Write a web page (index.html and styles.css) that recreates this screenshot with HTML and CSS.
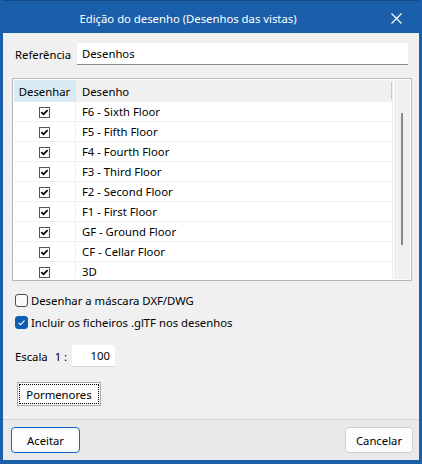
FILE: index.html
```html
<!DOCTYPE html>
<html lang="pt">
<head>
<meta charset="utf-8">
<title>Edição do desenho</title>
<link rel="stylesheet" href="styles.css">
</head>
<body>
<div class="window">
  <div class="titlebar">
    <div class="title">Edição do desenho (Desenhos das vistas)</div>
    <div class="close">
      <svg width="11" height="11" viewBox="0 0 11 11"><path d="M0.5 0.5 L10.5 10.5 M10.5 0.5 L0.5 10.5" stroke="#fff" stroke-width="1.2" fill="none"/></svg>
    </div>
  </div>
  <div class="body">
    <div class="ref-row">
      <span class="label ref-label">Referência</span>
      <div class="input ref-input">Desenhos</div>
    </div>
    <div class="table">
      <div class="list">
        <div class="head">
          <div class="c1 hc1">Desenhar</div>
          <div class="c2 hc2">Desenho</div>
          <div class="hsep"></div>
        </div>
        <div class="row"><div class="c1"><svg class="tcb" width="11" height="11" viewBox="0 0 11 11"><rect x="0.5" y="0.5" width="10" height="10" fill="#fff" stroke="#555"/><path d="M2.4 5.2 L4.5 7.4 L8.6 3.2" stroke="#000" stroke-width="1.7" fill="none"/></svg></div><div class="c2">F6 - Sixth Floor</div></div>
        <div class="row"><div class="c1"><svg class="tcb" width="11" height="11" viewBox="0 0 11 11"><rect x="0.5" y="0.5" width="10" height="10" fill="#fff" stroke="#555"/><path d="M2.4 5.2 L4.5 7.4 L8.6 3.2" stroke="#000" stroke-width="1.7" fill="none"/></svg></div><div class="c2">F5 - Fifth Floor</div></div>
        <div class="row"><div class="c1"><svg class="tcb" width="11" height="11" viewBox="0 0 11 11"><rect x="0.5" y="0.5" width="10" height="10" fill="#fff" stroke="#555"/><path d="M2.4 5.2 L4.5 7.4 L8.6 3.2" stroke="#000" stroke-width="1.7" fill="none"/></svg></div><div class="c2">F4 - Fourth Floor</div></div>
        <div class="row"><div class="c1"><svg class="tcb" width="11" height="11" viewBox="0 0 11 11"><rect x="0.5" y="0.5" width="10" height="10" fill="#fff" stroke="#555"/><path d="M2.4 5.2 L4.5 7.4 L8.6 3.2" stroke="#000" stroke-width="1.7" fill="none"/></svg></div><div class="c2">F3 - Third Floor</div></div>
        <div class="row"><div class="c1"><svg class="tcb" width="11" height="11" viewBox="0 0 11 11"><rect x="0.5" y="0.5" width="10" height="10" fill="#fff" stroke="#555"/><path d="M2.4 5.2 L4.5 7.4 L8.6 3.2" stroke="#000" stroke-width="1.7" fill="none"/></svg></div><div class="c2">F2 - Second Floor</div></div>
        <div class="row"><div class="c1"><svg class="tcb" width="11" height="11" viewBox="0 0 11 11"><rect x="0.5" y="0.5" width="10" height="10" fill="#fff" stroke="#555"/><path d="M2.4 5.2 L4.5 7.4 L8.6 3.2" stroke="#000" stroke-width="1.7" fill="none"/></svg></div><div class="c2">F1 - First Floor</div></div>
        <div class="row"><div class="c1"><svg class="tcb" width="11" height="11" viewBox="0 0 11 11"><rect x="0.5" y="0.5" width="10" height="10" fill="#fff" stroke="#555"/><path d="M2.4 5.2 L4.5 7.4 L8.6 3.2" stroke="#000" stroke-width="1.7" fill="none"/></svg></div><div class="c2">GF - Ground Floor</div></div>
        <div class="row"><div class="c1"><svg class="tcb" width="11" height="11" viewBox="0 0 11 11"><rect x="0.5" y="0.5" width="10" height="10" fill="#fff" stroke="#555"/><path d="M2.4 5.2 L4.5 7.4 L8.6 3.2" stroke="#000" stroke-width="1.7" fill="none"/></svg></div><div class="c2">CF - Cellar Floor</div></div>
        <div class="row"><div class="c1"><svg class="tcb" width="11" height="11" viewBox="0 0 11 11"><rect x="0.5" y="0.5" width="10" height="10" fill="#fff" stroke="#555"/><path d="M2.4 5.2 L4.5 7.4 L8.6 3.2" stroke="#000" stroke-width="1.7" fill="none"/></svg></div><div class="c2">3D</div></div>
      </div>
      <div class="scroll"><div class="thumb"></div></div>
    </div>
    <div class="options">
      <div class="opt"><span class="cb"></span><span>Desenhar a máscara DXF/DWG</span></div>
      <div class="opt"><span class="cb checked"><svg width="13" height="13" viewBox="0 0 13 13"><path d="M3.6 6.8 L5.6 8.7 L9.5 4.6" stroke="#fff" stroke-width="1.1" fill="none"/></svg></span><span>Incluir os ficheiros .glTF nos desenhos</span></div>
    </div>
    <div class="scale-row">
      <span class="label">Escala</span>
      <span class="label one">1 :</span>
      <div class="input scale-input">100</div>
    </div>
    <div class="btn-row">
      <div class="btn details">Pormenores</div>
    </div>
  </div>
  <div class="footer">
    <div class="btn fbtn primary">Aceitar</div>
    <div class="btn fbtn">Cancelar</div>
  </div>
</div>
</body>
</html>
```
FILE: styles.css
```css
* { box-sizing: border-box; }
html, body { margin: 0; padding: 0; }
body {
  font-family: "Noto Sans", "Open Sans", sans-serif;
  font-size: 11.3px;
  color: #000;
  background: #1b5fab;
}
.window {
  width: 422px;
  height: 464px;
  display: flex;
  flex-direction: column;
  border-left: 3px solid #1b5fab;
  border-right: 3px solid #1b5fab;
  border-bottom: 4px solid #1b5fab;
  background: #f0f0f0;
}
.titlebar {
  height: 33px;
  flex: none;
  display: flex;
  align-items: center;
  background: #1b5fab;
  border-top: 1px solid #14498a;
  color: #fff;
}
.title {
  flex: 1;
  text-align: center;
  padding-top: 2px;
}
.close {
  width: 46px;
  height: 100%;
  display: flex;
  align-items: center;
  justify-content: center;
  padding-top: 2px;
}
.body {
  flex: none;
  height: 386px;
  padding: 10px 7px 0 9px;
  display: flex;
  flex-direction: column;
}
.ref-row {
  display: flex;
  align-items: center;
  height: 22px;
  margin-right: 4px;
}
.label { margin-left: 3px; }
.ref-label { width: 62px; flex: none; }
.input {
  background: #fff;
  height: 22px;
  display: flex;
  align-items: center;
}
.ref-input {
  flex: 1;
  padding-left: 5px;
  border-bottom: 1px solid #8a8a8a;
}
.table {
  margin-top: 13px;
  width: 400px;
  height: 203px;
  border: 1px solid #b8b8b8;
  padding: 1px;
  background: #fff;
  display: flex;
}
.list {
  width: 379px;
  height: 100%;
  overflow: hidden;
  border-right: 1px solid #ececec;
  display: flex;
  flex-direction: column;
}
.head {
  flex: none;
  height: 22px;
  display: flex;
  align-items: stretch;
  background: #f0f0f0;
}
.c1 {
  width: 62px;
  flex: none;
  border-right: 1px solid #f0f0f0;
  display: flex;
  align-items: center;
  justify-content: center;
}
.c2 {
  flex: 1;
  padding-left: 6px;
  display: flex;
  align-items: center;
}
.hc1 {
  background: #d9eaf5;
  border-right: 1px solid #e4e4e4;
}
.hsep {
  width: 1px;
  margin: 2px 0 3px;
  background: #c8c8c8;
}
.row {
  flex: none;
  height: 20px;
  display: flex;
  border-bottom: 1px solid #f0f0f0;
}
.tcb { display: block; margin-top: 1px; }
.scroll {
  width: 16px;
  margin-left: 1px;
  height: 100%;
  background: #f0f0f0;
  padding-top: 33px;
}
.thumb {
  width: 2px;
  height: 132px;
  margin-left: 7px;
  background: #898989;
}
.options {
  margin-top: 8px;
  display: flex;
  flex-direction: column;
}
.opt {
  height: 22px;
  display: flex;
  align-items: center;
}
.cb {
  width: 13px;
  height: 13px;
  margin-left: 3px;
  margin-right: 3px;
  border: 1px solid #4d4d4d;
  border-radius: 3px;
  background: #f9f9f9;
  flex: none;
  display: flex;
}
.cb.checked {
  background: #0a5fb5;
  border-color: #0a5fb5;
}
.cb svg { display: block; margin: -1px; }
.scale-row {
  margin-top: 12px;
  width: 103px;
  height: 22px;
  display: flex;
  align-items: center;
}
.one { margin-left: 7px; }
.scale-input {
  width: 43px;
  margin-left: auto;
  justify-content: flex-end;
  padding-right: 5px;
  border-bottom: 1px solid #d6d6d6;
}
.btn-row {
  margin-top: 15px;
  display: flex;
}
.btn {
  display: flex;
  align-items: center;
  justify-content: center;
}
.details {
  margin-left: 5px;
  width: 84px;
  height: 24px;
  border: 1px solid #adadad;
  background: #fbfbfb;
  outline: 1px dotted #000;
  outline-offset: -3px;
}
.footer {
  flex: 1;
  border-top: 1px solid #d2d2d2;
  background: #e9e9e9;
  padding: 7px 6px 0 8px;
  display: flex;
  justify-content: space-between;
  align-items: flex-start;
}
.fbtn {
  width: 68px;
  height: 26px;
  background: #fdfdfd;
  border: 1px solid #cfcfcf;
  border-radius: 4px;
}
.fbtn.primary {
  width: 69px;
  border-color: #1467c0;
}
```
